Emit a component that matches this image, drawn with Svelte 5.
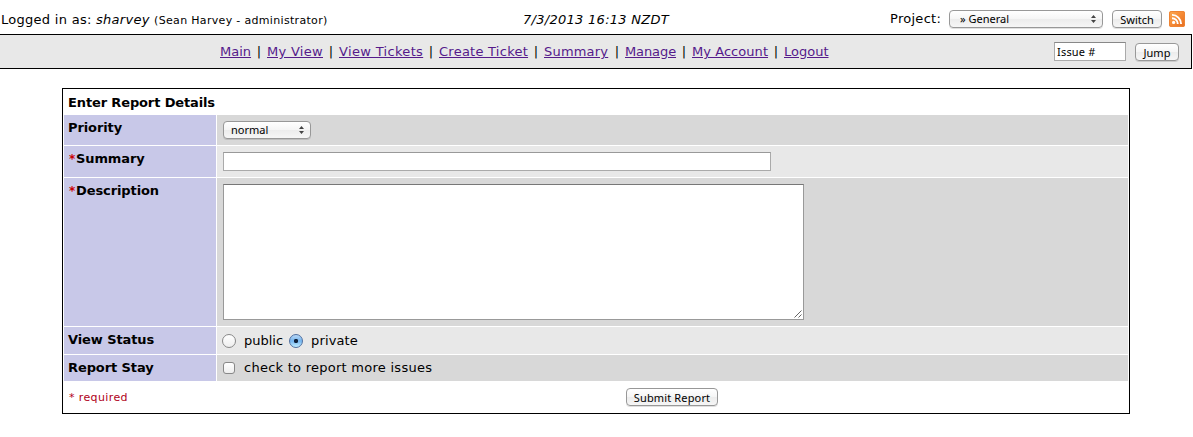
<script>
  const links = [
    ['Main', 31, 0], ['My View', 56, 0.3], ['View Tickets', 84, 0.33], ['Create Ticket', 89, 0.25],
    ['Summary', 65, 0.2], ['Manage', 51, -0.1], ['My Account', 76, 0.05], ['Logout', 44, 0]
  ];
  let issue = $state('Issue #');
  let summary = $state('');
  let description = $state('');
  let status = $state('private');
  let stay = $state(false);
</script>

{#snippet arrows()}
  <svg class="arrows" width="5" height="8" viewBox="0 0 5 8"><path d="M2.5 0 5 3H0zM2.5 8 5 5H0z" fill="#444" /></svg>
{/snippet}

<header>
  <div class="user">Logged in as: <i>sharvey</i> <small>(Sean Harvey - administrator)</small></div>
  <div class="time">7/3/2013 16:13 NZDT</div>
  <div class="project">
    <span class="plabel">Project:</span>
    <button class="ctl select psel"><span>» General</span>{@render arrows()}</button>
    <button class="ctl switch">Switch</button>
    <svg class="rss" width="16" height="16" viewBox="0 0 16 16">
      <defs><linearGradient id="o" x1="0" y1="0" x2="1" y2="1"><stop offset="0" stop-color="#fbab55" /><stop offset=".5" stop-color="#f58a35" /><stop offset="1" stop-color="#e56c20" /></linearGradient></defs>
      <rect width="16" height="16" rx="2.2" fill="url(#o)" />
      <rect x=".5" y=".5" width="15" height="15" rx="1.8" fill="none" stroke="#ee8434" />
      <circle cx="4.6" cy="11.4" r="1.6" fill="#fff" />
      <path d="M3 7.2A5.8 5.8 0 0 1 8.8 13M3 3.9A9.1 9.1 0 0 1 12.1 13" fill="none" stroke="#fff" stroke-width="1.9" />
    </svg>
  </div>
</header>

<nav>
  <div class="links">
    {#each links as [name, width, spacing], i}
      {#if i}<span class="sep">|</span>{/if}<a href="#top" style:width="{width}px" style:letter-spacing="{spacing}px">{name}</a>
    {/each}
  </div>
  <div class="jump">
    <input class="issue" bind:value={issue} />
    <button class="ctl jumpbtn">Jump</button>
  </div>
</nav>

<main>
  <div class="title">Enter Report Details</div>
  <div class="grid">
    <div class="label">Priority</div>
    <div class="cell dark"><button class="ctl select prio"><span>normal</span>{@render arrows()}</button></div>
    <div class="label"><span class="star">*</span>Summary</div>
    <div class="cell"><input class="summary" bind:value={summary} /></div>
    <div class="label"><span class="star">*</span>Description</div>
    <div class="cell dark">
      <div class="area">
        <textarea bind:value={description}></textarea>
        <svg class="grip" width="8" height="8" viewBox="0 0 8 8"><path d="M.5 7.5l7-7M4.5 7.5l3-3" stroke="#555" stroke-width=".9" /></svg>
      </div>
    </div>
    <div class="label">View Status</div>
    <div class="cell choice">
      <input type="radio" value="public" bind:group={status} /><span class="public">public</span>
      <input type="radio" value="private" bind:group={status} /><span class="private">private</span>
    </div>
    <div class="label">Report Stay</div>
    <div class="cell dark choice stay">
      <input type="checkbox" bind:checked={stay} /><span class="more">check to report more issues</span>
    </div>
  </div>
  <div class="foot">
    <span class="required">* required</span>
    <button class="ctl submit">Submit Report</button>
  </div>
</main>

<style>
  :global(body) { margin: 0; background: #fff; color: #000; font: 13px/16px "DejaVu Sans", sans-serif; }
  * { box-sizing: border-box; }
  header { display: flex; height: 34px; white-space: nowrap; }
  .user { width: 523px; padding: 12px 0 0 1px; letter-spacing: .28px; }
  small { font-size: 11px; letter-spacing: .32px; }
  .time { width: 367px; padding-top: 12px; font-style: italic; letter-spacing: .28px; }
  .project { display: flex; align-items: flex-start; padding-top: 10px; }
  .plabel { width: 59px; padding-top: 1px; letter-spacing: .28px; }
  .ctl {
    display: flex; align-items: center; justify-content: center; height: 18px; padding: 0; margin: 0;
    border: 1px solid #989898; border-radius: 4px; color: #000; white-space: nowrap;
    background: linear-gradient(#fff, #f5f5f5 50%, #ececec 51%, #f6f6f6);
    box-shadow: 0 1px 0 rgba(0, 0, 0, .12);
    font: 11px/14px "Noto Sans", sans-serif;
  }
  .select { justify-content: space-between; padding: 0 6px 0 7px; }
  .psel { width: 154px; padding-left: 10px; }
  .switch { width: 50px; margin-left: 9px; padding-top: 1px; }
  .rss { margin: 1px 0 0 7px; }

  nav { display: flex; width: 1192px; height: 35px; background: #e8e8e8; border: solid #000; border-width: 1px 1px 1px 0; }
  .links { display: flex; width: 1054px; padding: 9px 0 0 220px; }
  .links a { color: #551a8b; white-space: nowrap; text-decoration: underline; }
  .sep { width: 16px; text-align: center; }
  .jump { display: flex; align-items: flex-start; padding-top: 7px; }
  input, textarea { margin: 0; border-radius: 0; outline: none; background: #fff; }
  .issue { width: 72px; height: 19px; padding: 0 2px; border: 1px solid #aaa; border-top-color: #888; font: 11px "Noto Sans", sans-serif; letter-spacing: .2px; }
  .jumpbtn { width: 44px; margin: 1px 0 0 9px; padding-top: 1px; }

  main { width: 1068px; height: 326px; margin: 19px 0 0 62px; border: 1px solid #000; padding: 0 1px; }
  .title { height: 26px; padding: 6px 0 0 4px; font-weight: bold; letter-spacing: -.13px; }
  .grid { display: grid; grid-template-columns: 152px 911px; grid-template-rows: 30px 31px 148px 27px 26px; gap: 1px; }
  .label { background: #c8c8e8; padding: 5px 0 0 4px; font-weight: bold; letter-spacing: -.1px; }
  .star { display: inline-block; width: 8px; padding-left: 1px; color: #c00; font-size: 12px; line-height: 14px; }
  .cell { background: #e8e8e8; padding: 6px 0 0 6px; }
  .dark { background: #d8d8d8; }
  .prio { width: 88px; }
  .summary { display: block; width: 548px; height: 19px; border: 1px solid #aaa; border-top-color: #999; }
  .area { position: relative; width: 581px; height: 136px; }
  textarea { display: block; width: 100%; height: 100%; resize: none; border: 1px solid #999; border-top-color: #777; }
  .grip { position: absolute; right: 2px; bottom: 2px; }
  .choice { display: flex; align-items: flex-start; padding: 6px 0 0 5px; }
  .choice input { appearance: none; flex: none; width: 14px; height: 14px; margin: 1px 8px 0 0; border: 1px solid #888; background: linear-gradient(#fff, #eee); border-radius: 50%; }
  .choice input[type="radio"]:checked { border-color: #4f6fa0; background: radial-gradient(circle at 50% 50%, #10233c 0 1.8px, transparent 2.5px), linear-gradient(#b9d8f7, #74b4ee 50%, #c3efff); }
  .choice .public { width: 45px; }
  .choice .private { letter-spacing: .15px; }
  .choice .more { letter-spacing: .26px; }
  .choice input[type="checkbox"] { width: 12px; height: 12px; border-radius: 3px; margin: 2px 9px 0 1px; }
  .stay { padding-top: 5px; }
  .foot { display: flex; height: 32px; padding: 7px 0 0 4px; }
  .required { width: 558px; padding: 2px 0 0 1px; color: #b00020; font-size: 11px; letter-spacing: .38px; }
  .submit { width: 92px; padding-top: 1px; letter-spacing: .15px; }
</style>
